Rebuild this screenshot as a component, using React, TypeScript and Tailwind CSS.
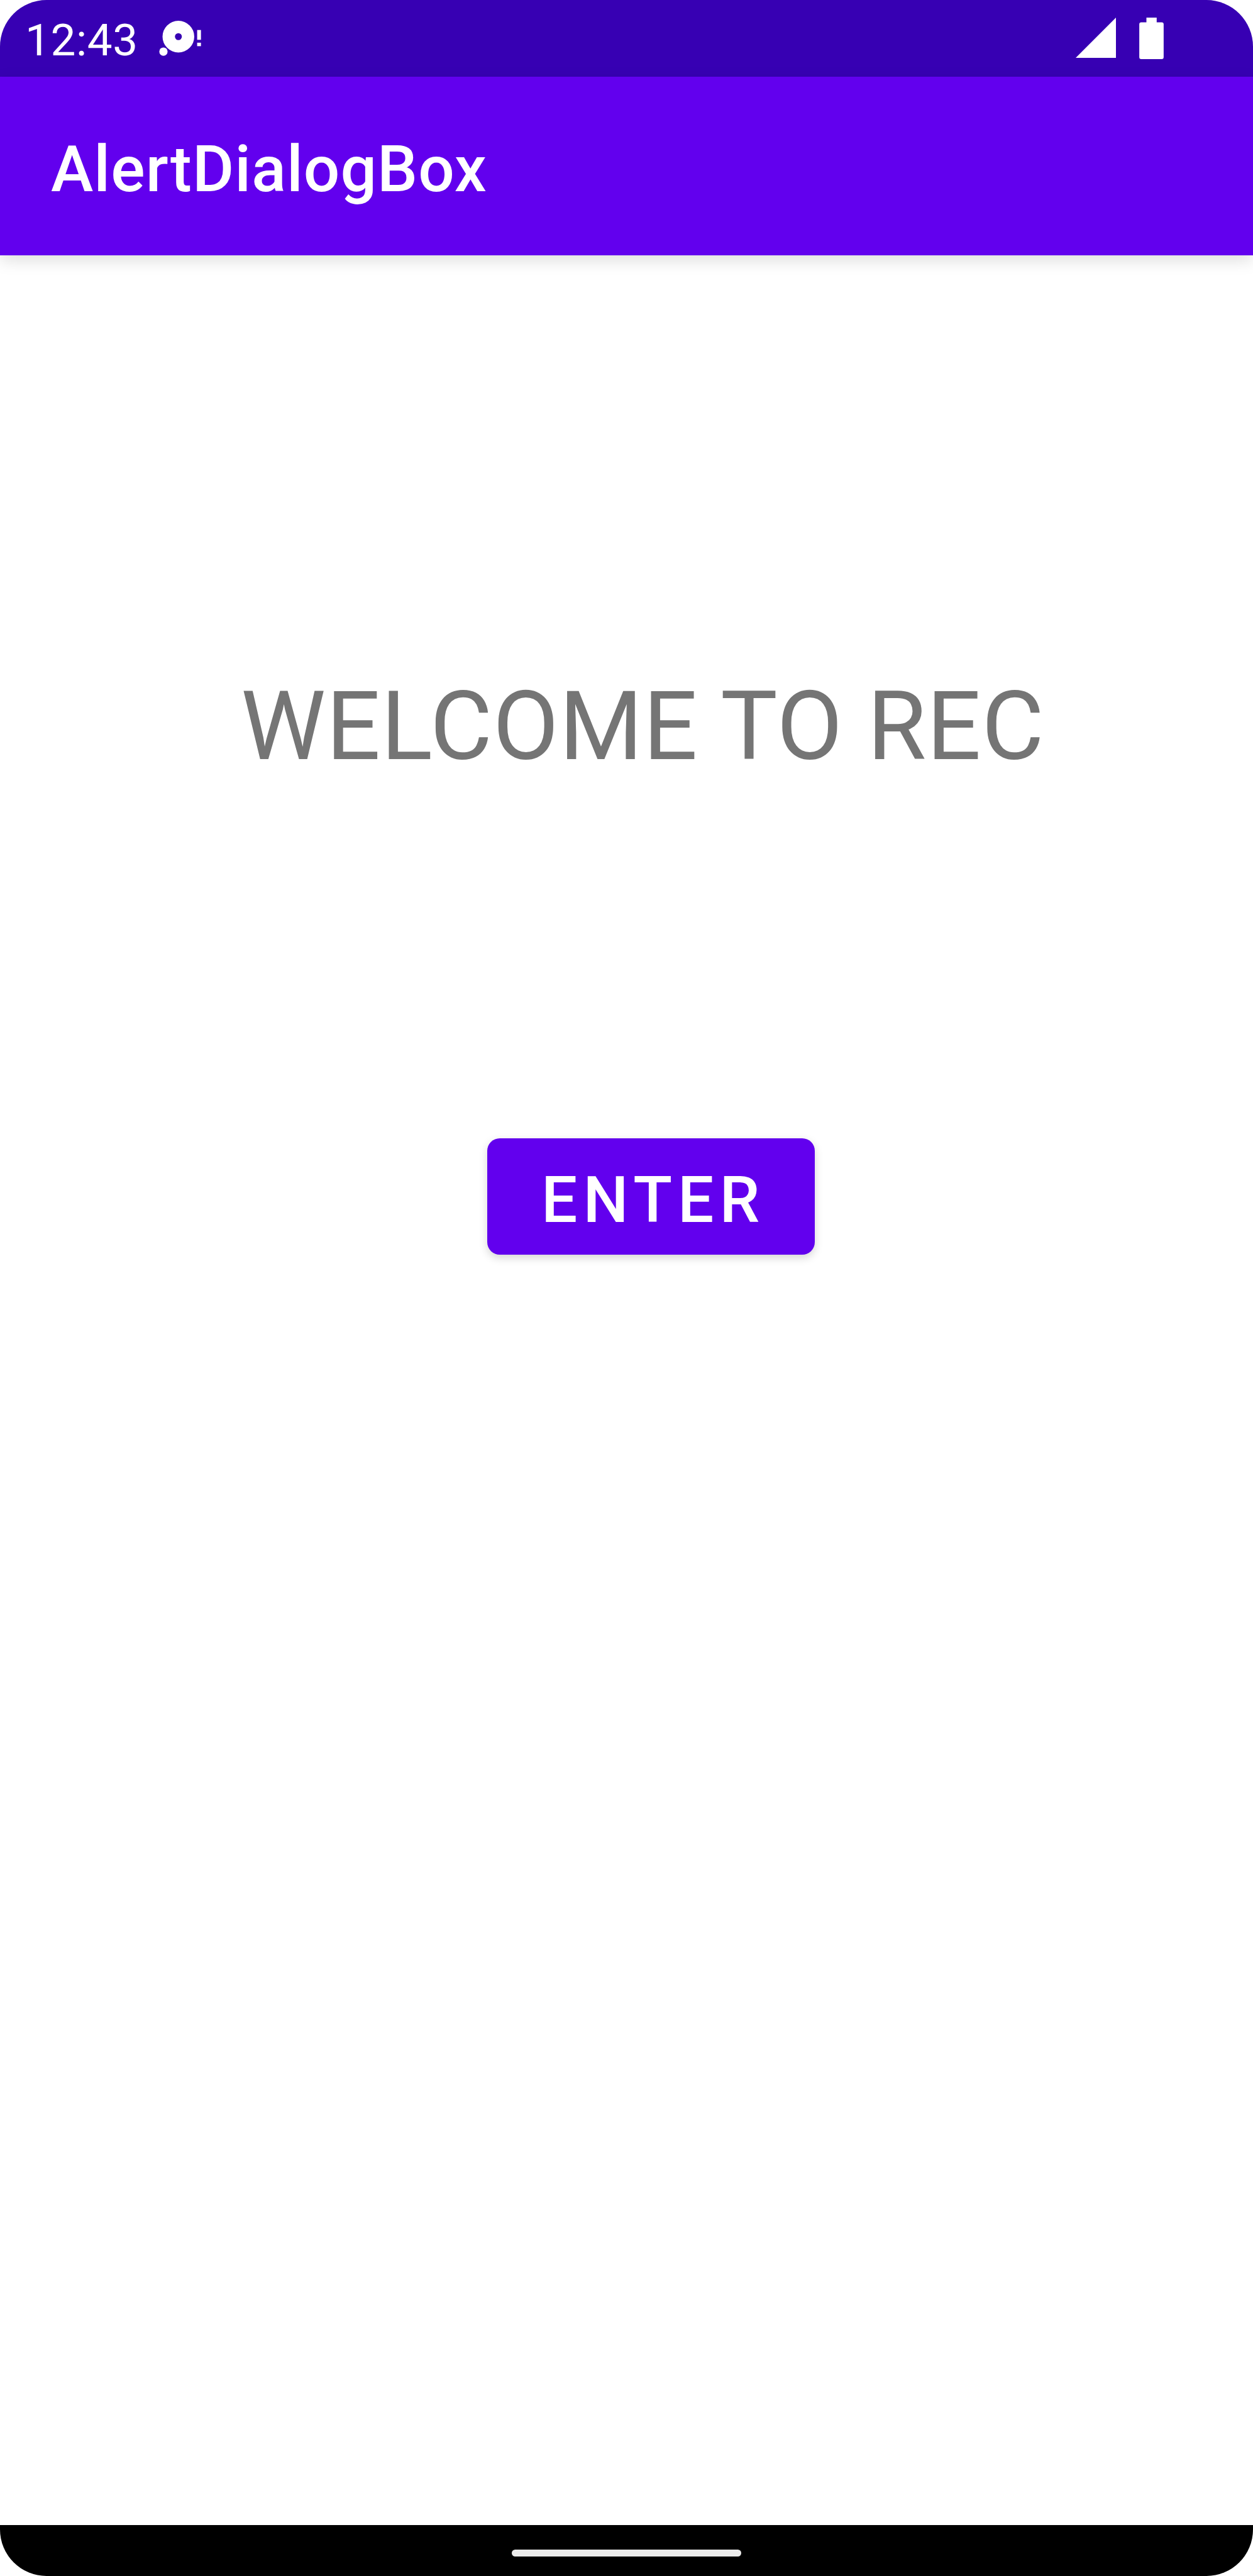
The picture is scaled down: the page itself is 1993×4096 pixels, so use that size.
function NotificationIcon() {
  return (
    <svg className="ml-[32px] mt-[33px] h-[56px] w-[69px] shrink-0" viewBox="273 36 75 61" fill="#fff">
      <path
        fillRule="evenodd"
        d="M307.5 36a27.5 27.5 0 1 1 0 55a27.5 27.5 0 1 1 0-55ZM307.5 57.5a6 6 0 1 0 0 12a6 6 0 1 0 0-12Z"
      />
      <circle cx="281.6" cy="89.4" r="7.2" />
      <rect x="340" y="52" width="6.6" height="17" />
      <rect x="340" y="74" width="6.6" height="6" />
    </svg>
  );
}

function SignalIcon() {
  return (
    <svg className="h-[64px] w-[64px]" viewBox="0 0 69 69" fill="#fff">
      <path d="M69 0V69H0Z" />
    </svg>
  );
}

function BatteryIcon() {
  return (
    <svg className="h-[66px] w-[39px]" viewBox="0 0 42 71.5" fill="#fff">
      <path d="M12.3 0H30V8H38.5A3.5 3.5 0 0 1 42 11.500V68A3.500 3.500 0 0 1 38.500 71.500H3.500A3.500 3.500 0 0 1 0 68V11.500A3.500 3.500 0 0 1 3.500 8H12.300Z" />
    </svg>
  );
}

function StatusBar() {
  return (
    <div className="flex h-[122px] shrink-0 items-start bg-[#3700b3] text-white">
      <span className="ml-[40px] mt-[22px] text-[71px] leading-[84px] tracking-[0.6px]">12:43</span>
      <NotificationIcon />
      <div className="ml-auto mr-[142px] mt-[28px] flex gap-[37px]">
        <SignalIcon />
        <BatteryIcon />
      </div>
    </div>
  );
}

export default function App() {
  return (
    <div className="h-[4096px] w-[1993px] overflow-hidden bg-white">
      <div className="flex h-full flex-col overflow-hidden rounded-[74px] bg-white font-['Roboto',sans-serif]">
        <StatusBar />
        <header className="relative flex h-[284px] shrink-0 items-center bg-[#6200ee] pl-[81px] pt-[12px] text-white shadow-[0_8px_24px_rgba(0,0,0,0.13)]">
          <h1 className="text-[101.5px] font-medium leading-[120px] tracking-[1.05px]">AlertDialogBox</h1>
        </header>
        <main className="flex flex-1 flex-col items-start">
          <p className="ml-[383px] mt-[659px] whitespace-nowrap text-[152.2px] leading-[180px] tracking-[0.8px] text-[#757575]">
            WELCOME TO REC
          </p>
          <button className="ml-[775px] mt-[565px] flex h-[185px] w-[520.5px] items-center justify-center rounded-[20px] bg-[#6200ee] pl-[8px] pt-[12px] text-[101.5px] font-medium leading-[120px] tracking-[0.0893em] text-white shadow-[0_5px_14px_rgba(0,0,0,0.17)]">
            ENTER
          </button>
        </main>
        <nav className="flex h-[81px] shrink-0 justify-center bg-black">
          <div className="mt-[39px] h-[11px] w-[365px] rounded-full bg-[#ebebeb]" />
        </nav>
      </div>
    </div>
  );
}
